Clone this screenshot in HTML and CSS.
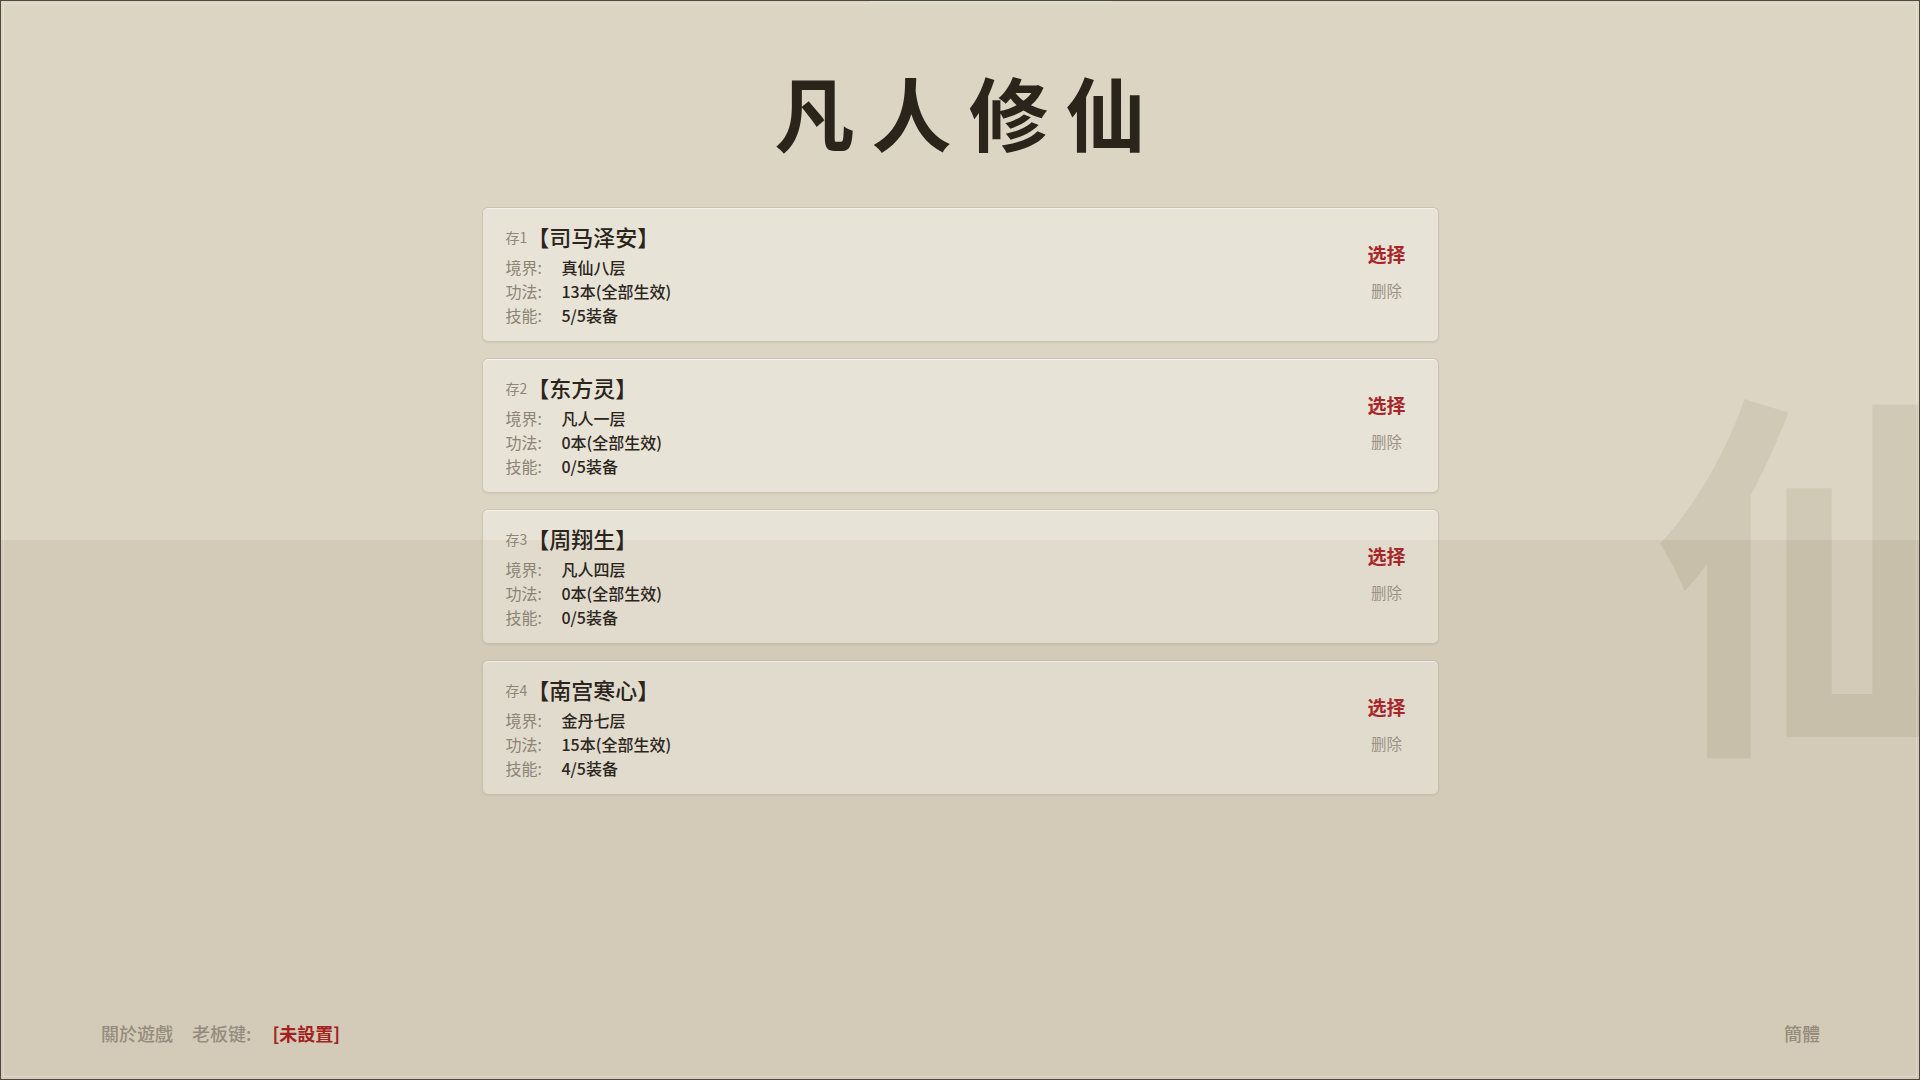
FILE: index.html
```html
<!DOCTYPE html>
<html>
  <head>
    <title>凡人修仙</title>
    <link rel="stylesheet" href="styles.css">
  </head>
  <body>
    <div class="tab-mark"></div>
    <div class="watermark" aria-hidden="true">仙</div>

    <h1 class="title">凡人修仙</h1>

    <div id="saves">
      <div class="save">
        <div class="info">
          <div class="head"><span class="slot">存1</span><span class="name">【司马泽安】</span></div>
          <div class="row"><span class="label">境界:</span><span class="value">真仙八层</span></div>
          <div class="row"><span class="label">功法:</span><span class="value">13本(全部生效)</span></div>
          <div class="row"><span class="label">技能:</span><span class="value">5/5装备</span></div>
        </div>
        <div class="actions">
          <a class="pick">选择</a>
          <a class="del">删除</a>
        </div>
      </div>
      <div class="save">
        <div class="info">
          <div class="head"><span class="slot">存2</span><span class="name">【东方灵】</span></div>
          <div class="row"><span class="label">境界:</span><span class="value">凡人一层</span></div>
          <div class="row"><span class="label">功法:</span><span class="value">0本(全部生效)</span></div>
          <div class="row"><span class="label">技能:</span><span class="value">0/5装备</span></div>
        </div>
        <div class="actions">
          <a class="pick">选择</a>
          <a class="del">删除</a>
        </div>
      </div>
      <div class="save">
        <div class="info">
          <div class="head"><span class="slot">存3</span><span class="name">【周翔生】</span></div>
          <div class="row"><span class="label">境界:</span><span class="value">凡人四层</span></div>
          <div class="row"><span class="label">功法:</span><span class="value">0本(全部生效)</span></div>
          <div class="row"><span class="label">技能:</span><span class="value">0/5装备</span></div>
        </div>
        <div class="actions">
          <a class="pick">选择</a>
          <a class="del">删除</a>
        </div>
      </div>
      <div class="save">
        <div class="info">
          <div class="head"><span class="slot">存4</span><span class="name">【南宫寒心】</span></div>
          <div class="row"><span class="label">境界:</span><span class="value">金丹七层</span></div>
          <div class="row"><span class="label">功法:</span><span class="value">15本(全部生效)</span></div>
          <div class="row"><span class="label">技能:</span><span class="value">4/5装备</span></div>
        </div>
        <div class="actions">
          <a class="pick">选择</a>
          <a class="del">删除</a>
        </div>
      </div>
    </div>

    <div id="footer">
      <div class="links">
        <a class="link">關於遊戲</a>
        <span class="link">老板键:</span>
        <a class="hotkey">[未設置]</a>
      </div>
      <a class="link">簡體</a>
    </div>
  </body>
</html>
```

FILE: styles.css
```css
/* whole window */
html, body {
  height: 100%;
}

body {
  margin: 0;
  box-sizing: border-box;
  height: 100vh;
  border: 1px solid #4e4840;
  outline: 1px solid rgba(255, 255, 255, 0.25);
  outline-offset: -4px;
  position: relative;
  overflow: hidden;
  display: flex;
  flex-direction: column;
  font-family: "Noto Sans CJK SC", "Noto Sans", sans-serif;
  color: #2e281f;
  background: linear-gradient(to bottom, #dcd5c3 0, #dcd5c3 50%, #d3cab7 50%, #d3cab7 100%);
}

.tab-mark {
  position: absolute;
  top: -1px;
  left: 869px;
  width: 242px;
  height: 2px;
  background: #e7e1d9;
}

/* big faded character on the right */
.watermark {
  position: absolute;
  left: 1651px;
  top: 364px;
  font-size: 384px;
  line-height: 1;
  font-weight: 700;
  color: rgba(110, 95, 60, 0.1);
  pointer-events: none;
}

.title {
  margin: 61px 0 0;
  font-size: 80px;
  line-height: 96px;
  font-weight: 700;
  letter-spacing: 17px;
  padding-left: 17px;
  text-align: center;
  color: #2b241a;
}

/* save slots */
#saves {
  width: 957px;
  margin: 49px auto 0;
  display: flex;
  flex-direction: column;
  gap: 16px;
  position: relative;
}

.save {
  box-sizing: border-box;
  height: 135px;
  display: flex;
  align-items: center;
  padding: 0 32px 0 23px;
  background: rgba(255, 255, 255, 0.33);
  border: 1px solid rgba(150, 138, 115, 0.35);
  border-radius: 6px;
  box-shadow: inset 0 1px 0 rgba(255, 255, 255, 0.5), 0 1px 2px rgba(80, 70, 50, 0.08);
}

.info {
  flex: 1;
}

.head {
  height: 28px;
  line-height: 28px;
  margin-bottom: 5px;
  display: flex;
  align-items: center;
}

.slot {
  font-size: 14px;
  color: #8e8678;
  padding-top: 2px;
}

.name {
  font-size: 22px;
  font-weight: 500;
  color: #2a241b;
}

.row {
  height: 24px;
  line-height: 24px;
  font-size: 16px;
  display: flex;
}

.label {
  width: 56px;
  color: #8c8474;
}

.value {
  font-weight: 500;
  color: #2b251c;
}

.actions {
  display: flex;
  flex-direction: column;
  align-items: center;
  gap: 12px;
  margin-bottom: 5px;
}

.pick {
  font-size: 19px;
  line-height: 24px;
  font-weight: 700;
  color: #a8262a;
  cursor: pointer;
}

.del {
  font-size: 15.5px;
  line-height: 24px;
  color: #9b9387;
  cursor: pointer;
}

/* bottom bar */
#footer {
  margin-top: auto;
  margin-bottom: 34px;
  padding: 0 99px 0 100px;
  display: flex;
  justify-content: space-between;
  align-items: center;
  font-size: 18px;
  line-height: 24px;
  position: relative;
}

.links {
  display: flex;
  gap: 19px;
}

.link {
  color: #958c7e;
  font-weight: 500;
  cursor: pointer;
}

.hotkey {
  margin-left: 2px;
  color: #a3221f;
  font-weight: 700;
  cursor: pointer;
}
```
